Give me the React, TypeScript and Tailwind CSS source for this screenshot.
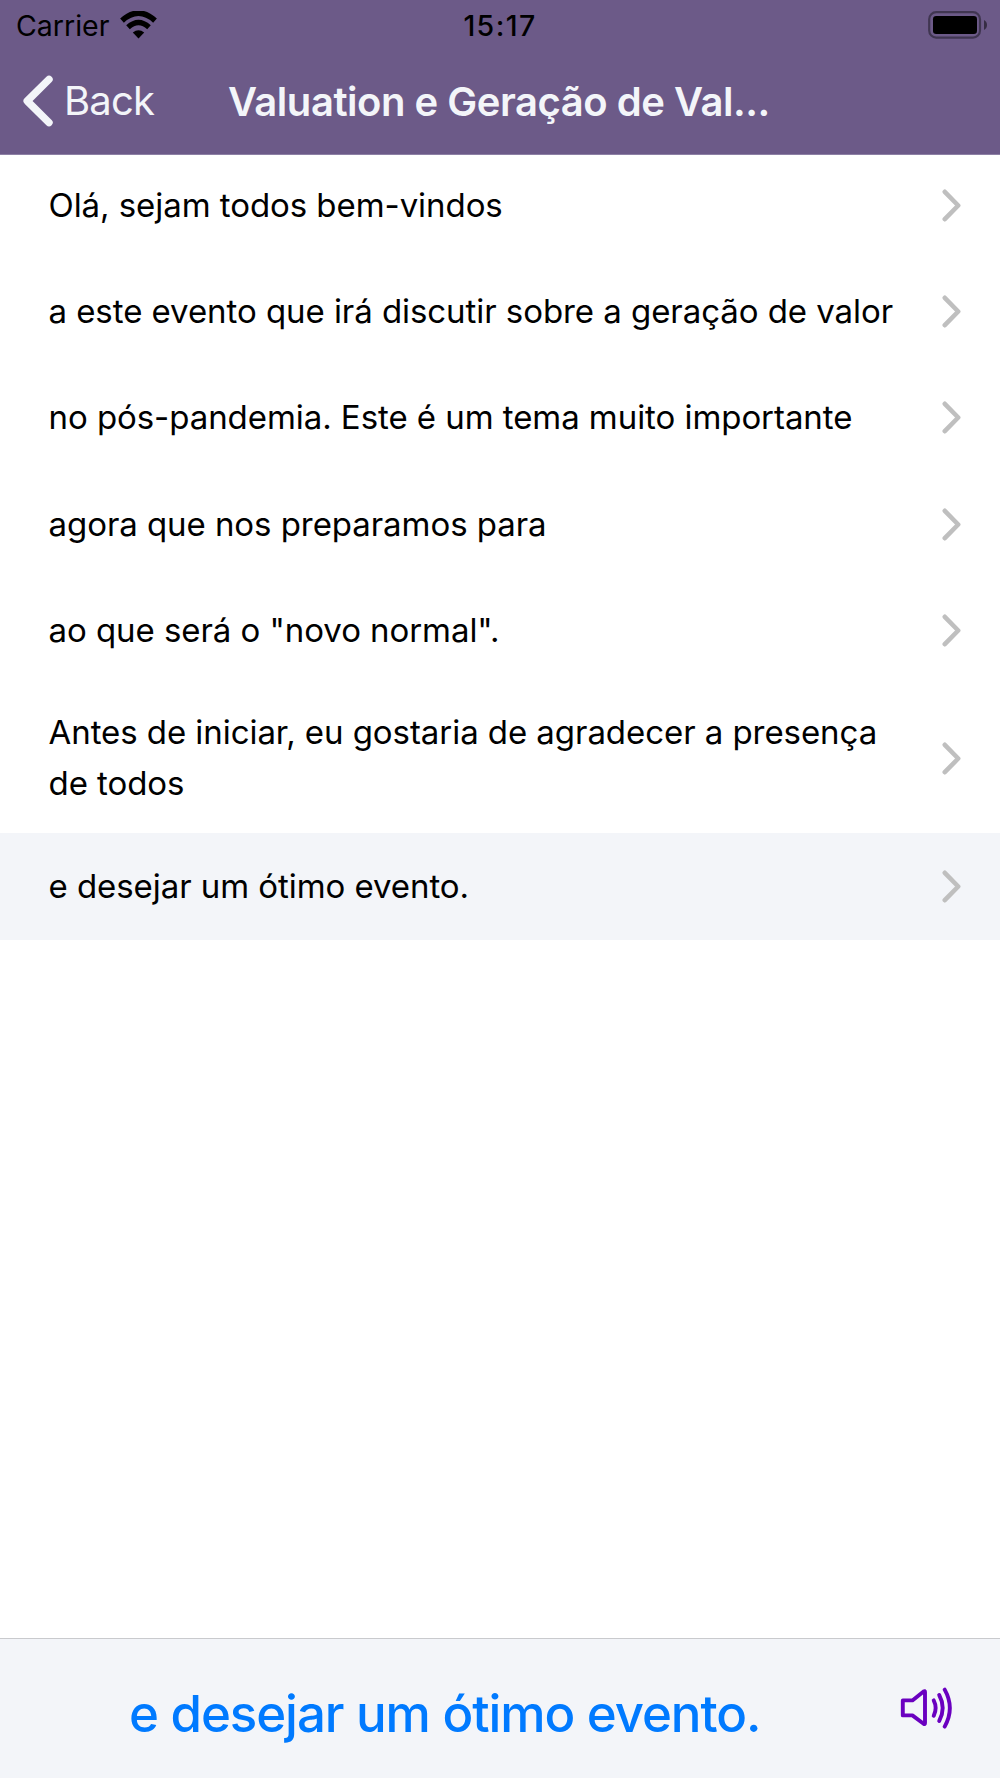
import { FunctionComponent } from "react";

interface RowProps {
    text: string;
    active?: boolean;
    tall?: boolean;
}

const CAPTIONS: RowProps[] = [
    { text: 'Olá, sejam todos bem-vindos' },
    { text: 'a este evento que irá discutir sobre a geração de valor' },
    { text: 'no pós-pandemia. Este é um tema muito importante' },
    { text: 'agora que nos preparamos para' },
    { text: 'ao que será o "novo normal".' },
    { text: 'Antes de iniciar, eu gostaria de agradecer a presença de todos', tall: true },
    { text: 'e desejar um ótimo evento.', active: true },
];

const WifiIcon = ()=>{
    return <svg className="w-[37px] h-[28px] shrink-0" viewBox="0 0 37 28" fill="none">
        <path d="M2 9.6Q18.5 -5.2 35 9.6" stroke="#000" strokeWidth="5.6" />
        <path d="M8 16.2Q18.5 6.8 29 16.2" stroke="#000" strokeWidth="5.4" />
        <path d="M18.5 27.4L12.8 21.6Q18.5 17 24.2 21.6Z" fill="#000" />
    </svg>;
}

const BatteryIcon = ()=>{
    return <svg className="w-[60px] h-[28px] shrink-0" viewBox="0 0 60 28" fill="none">
        <rect x="1.2" y="1.2" width="50.8" height="25.4" rx="7" stroke="#000" strokeOpacity="0.4" strokeWidth="2.2" />
        <rect x="5" y="5" width="44" height="18" rx="3.2" fill="#000" />
        <path d="M56 9Q59 10.6 59 14Q59 17.4 56 19Z" fill="#000" fillOpacity="0.5" />
    </svg>;
}

const Chevron = ()=>{
    return <svg className="w-[20px] h-[33px] shrink-0" viewBox="0 0 20 33" fill="none">
        <path d="M2.8 2.8L16.2 16.5L2.8 30.2" stroke="#bfbfbf" strokeWidth="4.6" strokeLinecap="round" strokeLinejoin="round" />
    </svg>;
}

const SpeakerIcon = ()=>{
    return <svg className="w-[52px] h-[42px] shrink-0" viewBox="0 0 52 42" fill="none" stroke="#6a00c0" strokeWidth="3.9" strokeLinecap="round" strokeLinejoin="round">
        <path d="M2.8 13.4H12.4L23.6 4.4Q25 3.6 25 5V36Q25 37.6 23.6 36.8L12.4 28.4H2.8Z" />
        <path d="M33.7 13.4Q37.6 21 33.7 28.8" />
        <path d="M39.2 8Q46.2 21 39.2 34" />
        <path d="M44.7 2.6Q55 21 44.7 39.6" />
    </svg>;
}

const Header = ()=>{
    return <header className="h-[155px] shrink-0 bg-[#6c5a88] border-b border-[#8d80a5] overflow-hidden">
        <div className="grid grid-cols-3 items-center h-[50px] text-[28.5px]">
            <div className="flex items-center pl-[16px] gap-[10px] leading-none">
                <span className="w-[94px] pt-[2px] whitespace-nowrap">Carrier</span>
                <WifiIcon />
            </div>
            <div className="pt-[2px] text-center font-medium leading-none tracking-[1.4px]">15:17</div>
            <div className="flex justify-end pr-[12px]">
                <BatteryIcon />
            </div>
        </div>
        <div className="flex items-center h-[102px] text-[#f3f5f9] text-[40px] leading-none">
            <button className="flex items-center pl-[22px] w-[228px]">
                <svg className="w-[31px] h-[52px] shrink-0" viewBox="0 0 31 52" fill="none">
                    <path d="M27 4.4L5.2 26L27 47.6" stroke="#f3f5f9" strokeWidth="7.4" strokeLinecap="round" strokeLinejoin="round" />
                </svg>
                <span className="ml-[11px] tracking-[-0.8px]">Back</span>
            </button>
            <h1 className="pt-[2px] font-semibold whitespace-nowrap tracking-[-0.47px]">Valuation e Geração de Val...</h1>
        </div>
    </header>;
}

const Row: FunctionComponent<RowProps> = ({text, active, tall})=>{
    return <li className={`flex items-center justify-between pl-[48.5px] pr-[38px] ${tall ? 'h-[149.5px]' : 'h-[106.4px]'} ${active ? 'bg-[#f3f5f9]' : 'bg-white'}`}>
        <span className={`w-[870px] text-[33px] leading-[51px] tracking-[-0.06px] ${tall ? 'pb-[2px]' : ''}`}>{text}</span>
        <Chevron />
    </li>;
}

const App = ()=>{
    const current = CAPTIONS.find(caption=>caption.active);

    return (
    <div className="flex flex-col w-[1000px] h-[1778px] bg-white text-black overflow-hidden font-['Inter','Liberation_Sans',sans-serif]">
        <Header />
        <main className="flex-1 overflow-hidden">
            <ul className="-mt-[3px]">
                {CAPTIONS.map((caption, i)=><Row key={i} {...caption} />)}
            </ul>
        </main>
        <footer className="flex items-center justify-between h-[140px] shrink-0 pl-[129px] pr-[48px] pb-[2px] bg-[#f3f5f9] border-t border-[#c9cacd]">
            <p className="pt-[11px] text-[51px] leading-none font-medium text-[#007aff] whitespace-nowrap tracking-[-1.06px]">{current?.text}</p>
            <SpeakerIcon />
        </footer>
    </div>);
}

export default App;
